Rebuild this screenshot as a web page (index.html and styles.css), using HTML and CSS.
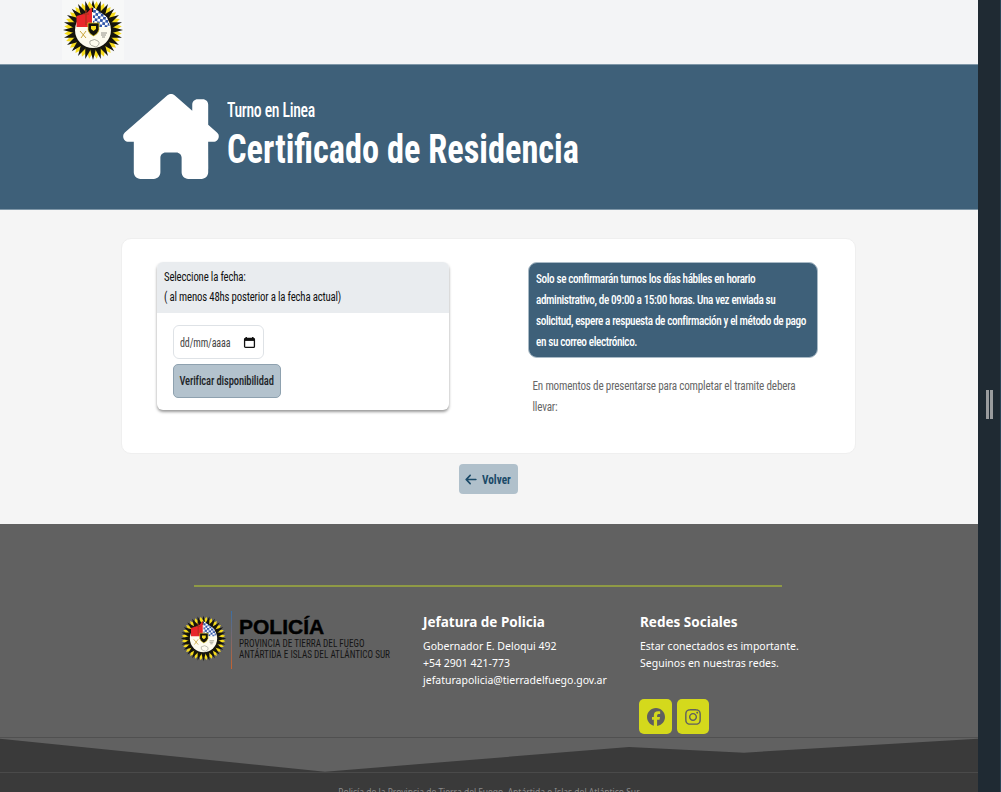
FILE: index.html
```html
<!DOCTYPE html>
<html lang="es">
<head>
<meta charset="utf-8">
<title>Certificado de Residencia</title>
<link rel="stylesheet" href="styles.css">
</head>
<body>
<svg class="defs" width="0" height="0" aria-hidden="true">
  <defs>
    <pattern id="chk" width="5.400" height="5.400" patternUnits="userSpaceOnUse" patternTransform="rotate(8)">
      <rect width="5.400" height="5.400" fill="#fff"/>
      <rect width="2.700" height="2.700" fill="#2f55a8"/>
      <rect x="2.700" y="2.700" width="2.700" height="2.700" fill="#2f55a8"/>
    </pattern>
    <g id="ray">
      <path d="M27.500 8h7L31 1z" fill="#f6dc1c" transform="rotate(7.500 31 30)"/>
      <path d="M27.500 13h7L31 0z" fill="#15140c"/>
    </g>
    <g id="rays6">
      <use href="#ray"/>
      <use href="#ray" transform="rotate(15 31 30)"/>
      <use href="#ray" transform="rotate(30 31 30)"/>
      <use href="#ray" transform="rotate(45 31 30)"/>
      <use href="#ray" transform="rotate(60 31 30)"/>
      <use href="#ray" transform="rotate(75 31 30)"/>
    </g>
    <symbol id="crest" viewBox="0 0 62 60">
      <circle cx="31" cy="30" r="24" fill="#f6dc1c"/>
      <use href="#rays6"/>
      <use href="#rays6" transform="rotate(90 31 30)"/>
      <use href="#rays6" transform="rotate(180 31 30)"/>
      <use href="#rays6" transform="rotate(270 31 30)"/>
      <circle cx="31" cy="30" r="18" fill="#fdfbee"/>
      <path d="M14.500 27V16L25 13 30 7v20z" fill="#e8262a"/>
      <path d="M24 10v15M21 14h6" stroke="#a8331c" stroke-width="1.200" fill="none"/>
      <path d="M31 7l14 10 3 10H31z" fill="url(#chk)"/>
      <path d="M26 23h11v7q-1 4-5.500 6q-4.500-2-5.500-6z" fill="#14130c" stroke="#f6dc1c" stroke-width=".7"/>
      <path d="M29 26h5v3l-2.500 2-2.500-2z" fill="#f6dc1c"/>
      <path d="M18 31l6 7M24 31l-5 7" stroke="#c9a43a" stroke-width="1"/>
      <path d="M28 41q5-3 8 0t-2 6l-3-1q-4-1-3-5z" fill="none" stroke="#8a8a80" stroke-width=".7"/>
      <path d="M39 33h6M39 35h5M40 37h3" stroke="#77776c" stroke-width=".8"/>
    </symbol>
  </defs>
</svg>
<div class="page">
  <header class="topbar">
    <svg class="crest-top"><use href="#crest"/></svg>
  </header>
  <section class="hero">
    <svg class="hero-icon" viewBox="0 0 576 512"><path fill="#fff" d="M543.800 287.600c17 0 32-14 32-32.100c1-9-3-17-11-24L512 185V64c0-17.700-14.300-32-32-32H448c-17.700 0-32 14.300-32 32v36.700L309.500 7c-6-5-14-7-21-7s-15 1-22 8L10 231.500c-7 7-10 15-10 24c0 18 14 32.100 32 32.100h32v69.700c-.1 .9-.1 1.800-.1 2.800V472c0 22.100 17.900 40 40 40h16c1.200 0 2.400-.1 3.600-.2c1.500 .1 3 .2 4.500 .2H160h24c22.100 0 40-17.900 40-40V448 384c0-17.700 14.300-32 32-32h64c17.700 0 32 14.300 32 32v64 24c0 22.100 17.900 40 40 40h24 32.500c1.400 0 2.800 0 4.200-.1c1.100 .1 2.200 .1 3.300 .1h16c22.100 0 40-17.900 40-40V455.800c.3-2.600 .5-5.300 .5-8.100l-.7-160.200h32z"/></svg>
    <div class="hero-text">
      <p class="hero-sub">Turno en Linea</p>
      <h1 class="hero-title">Certificado de Residencia</h1>
    </div>
  </section>
  <main class="main">
    <section class="panel">
      <div class="date-card">
        <div class="date-head">
          <p>Seleccione la fecha:</p>
          <p>( al menos 48hs posterior a la fecha actual)</p>
        </div>
        <div class="date-body">
          <div class="date-input">
            <span class="date-text">dd/mm/aaaa</span>
            <svg class="cal" viewBox="0 0 14 14"><path d="M3.500 1v2M10.500 1v2" stroke="#111" stroke-width="1.500"/><rect x="1.700" y="2.700" width="10.600" height="9.600" rx="1" fill="none" stroke="#111" stroke-width="1.400"/><rect x="1.700" y="2.700" width="10.600" height="2.600" fill="#111"/></svg>
          </div>
          <button class="btn-check" type="button"><span>Verificar disponibilidad</span></button>
        </div>
      </div>
      <div class="info">
        <div class="notice"><p>Solo se confirmarán turnos los días hábiles en horario<br>administrativo, de 09:00 a 15:00 horas. Una vez enviada su<br>solicitud, espere a respuesta de confirmación y el método de pago<br>en su correo electrónico.</p></div>
        <p class="bring">En momentos de presentarse para completar el tramite debera<br>llevar:</p>
      </div>
    </section>
    <button class="btn-back" type="button">
      <svg viewBox="0 0 448 512"><path fill="#1b4a68" d="M9.400 233.400c-12.500 12.500-12.500 32.800 0 45.300l160 160c12.500 12.500 32.800 12.500 45.300 0s12.500-32.800 0-45.300L109.200 288 416 288c17.700 0 32-14.300 32-32s-14.300-32-32-32l-306.700 0L214.600 118.600c12.500-12.500 12.500-32.800 0-45.300s-32.800-12.500-45.300 0l-160 160z"/></svg>
      <span>Volver</span>
    </button>
  </main>
  <footer class="footer">
    <hr class="rule">
    <div class="cols">
      <div class="brand">
        <svg class="crest-foot"><use href="#crest"/></svg>
        <span class="brand-rule"></span>
        <div class="brand-text">
          <strong>POLICÍA</strong>
          <span>PROVINCIA DE TIERRA DEL FUEGO</span>
          <span>ANTÁRTIDA E ISLAS DEL ATLÁNTICO SUR</span>
        </div>
      </div>
      <div class="col-contact">
        <h2>Jefatura de Policia</h2>
        <p>Gobernador E. Deloqui 492</p>
        <p>+54 2901 421-773</p>
        <p>jefaturapolicia@tierradelfuego.gov.ar</p>
      </div>
      <div class="col-social">
        <h2>Redes Sociales</h2>
        <p>Estar conectados es importante.</p>
        <p>Seguinos en nuestras redes.</p>
        <div class="socials">
          <a class="social social-fb" href="#"><svg viewBox="0 0 512 512"><path fill="#5f5f5f" d="M512 256C512 114.600 397.400 0 256 0S0 114.600 0 256C0 376 82.700 476.800 194.200 504.500V334.200H141.400V256h52.800V222.300c0-87.100 39.400-127.500 125-127.500c16.200 0 44.200 3.200 55.700 6.400V172c-6-.6-16.500-1-29.600-1c-42 0-58.200 15.900-58.200 57.200V256h83.600l-14.400 78.200H287V510.100C413.800 494.800 512 386.900 512 256h0z"/></svg></a>
          <a class="social" href="#"><svg viewBox="0 0 448 512"><path fill="#5f5f5f" d="M224.100 141c-63.600 0-114.900 51.300-114.900 114.900s51.300 114.900 114.900 114.900S339 319.500 339 255.900 287.700 141 224.100 141zm0 189.600c-41.100 0-74.700-33.500-74.700-74.700s33.500-74.700 74.700-74.700 74.700 33.500 74.700 74.700-33.600 74.700-74.700 74.700zm146.400-194.300c0 14.900-12 26.800-26.800 26.800-14.900 0-26.800-12-26.800-26.800s12-26.800 26.800-26.800 26.800 12 26.800 26.800zm76.100 27.200c-1.700-35.900-9.900-67.700-36.200-93.900-26.200-26.200-58-34.400-93.900-36.200-37-2.100-147.900-2.100-184.900 0-35.800 1.700-67.600 9.900-93.900 36.100s-34.400 58-36.200 93.900c-2.100 37-2.100 147.900 0 184.900 1.700 35.900 9.900 67.700 36.200 93.900s58 34.400 93.900 36.200c37 2.100 147.900 2.100 184.900 0 35.900-1.700 67.700-9.900 93.900-36.200 26.200-26.200 34.400-58 36.200-93.900 2.100-37 2.100-147.800 0-184.800zM398.800 388c-7.800 19.600-22.900 34.700-42.600 42.600-29.500 11.700-99.500 9-132.100 9s-102.700 2.600-132.100-9c-19.600-7.800-34.700-22.900-42.600-42.600-11.700-29.500-9-99.500-9-132.100s-2.600-102.700 9-132.100c7.800-19.600 22.900-34.700 42.600-42.600 29.500-11.700 99.500-9 132.100-9s102.700-2.600 132.100 9c19.600 7.800 34.700 22.900 42.600 42.600 11.700 29.500 9 99.500 9 132.100s2.700 102.700-9 132.100z"/></svg></a>
        </div>
      </div>
    </div>
    <svg class="wave" viewBox="0 0 978 34" preserveAspectRatio="none"><path fill="#3a3a3a" d="M0 .7L325 33.700 629 9 744 14.700 978 .7V34H0z"/></svg>
    <div class="copy"><p>Policía de la Provincia de Tierra del Fuego, Antártida e Islas del Atlántico Sur</p></div>
  </footer>
</div>
<aside class="rail"><span class="grip"></span><span class="grip"></span></aside>
</body>
</html>
```

FILE: styles.css
```css
* { box-sizing: border-box; }
html, body { margin: 0; height: 100%; }
body {
  display: flex;
  height: 792px;
  overflow: hidden;
  font-family: Roboto, "Liberation Sans", sans-serif;
  font-stretch: 75%;
  background: #f5f5f5;
}
p, h1, h2 { margin: 0; }
.defs { position: absolute; }
.page { width: 978px; flex: none; display: flex; flex-direction: column; }

.topbar { height: 64px; background: #f3f4f6; padding-left: 62px; flex: none; }
.crest-top { width: 62px; height: 60px; display: block; background: #f7f8f8; }

.hero {
  height: 146px;
  flex: none;
  background: #3e6079;
  border-top: 1px solid #7f97a8;
  border-bottom: 1px solid #7f97a8;
  display: flex;
  align-items: center;
  padding-left: 123px;
  gap: 8px;
  color: #fff;
}
.hero-icon { width: 96px; height: 85px; flex: none; margin-top: -1px; }
.hero-text { margin-top: -2px; }
.hero-sub { font-size: 20px; line-height: 24px; font-weight: 500; letter-spacing: -.4px; transform: scaleX(.786); transform-origin: left; white-space: nowrap; margin-top: -2px; }
.hero-title { margin-top: 5px; font-size: 40px; line-height: 46px; font-weight: 700; transform: scaleX(.858); transform-origin: left; white-space: nowrap; }

.main { height: 314px; flex: none; background: #f5f5f5; padding: 28px 2px 0 0; display: flex; flex-direction: column; align-items: center; }
.panel {
  width: 735px;
  height: 216px;
  background: #fff;
  border: 1px solid #efefef;
  border-radius: 10px;
  padding: 23px 37px 23px 35px;
  display: flex;
  justify-content: space-between;
  flex: none;
}
.date-card {
  width: 292px;
  height: 148px;
  background: #fff;
  border-radius: 6px;
  box-shadow: 0 2px 3px rgba(0,0,0,.4);
  overflow: hidden;
}
.date-head { height: 51px; background: #e9ecef; padding: 5px 7px; font-size: 12.500px; line-height: 20px; color: #111; letter-spacing: -.2px; }
.date-head p { transform: scaleX(.862); transform-origin: left; white-space: nowrap; }
.date-body { padding: 12px 16px; display: flex; flex-direction: column; align-items: flex-start; gap: 5px; }
.date-input {
  width: 91px; height: 34px;
  border: 1px solid #dee2e6;
  border-radius: 6px;
  display: flex; align-items: center; justify-content: space-between;
  padding: 0 7px 0 6px;
  font-size: 12.500px; color: #444; letter-spacing: -.15px;
}
.date-text { display: block; width: 52px; transform: scaleX(.8); transform-origin: left; white-space: nowrap; }
.cal { width: 13px; height: 13px; }
.btn-check {
  width: 108px; height: 34px;
  padding: 0;
  display: flex; align-items: center; justify-content: center;
  background: #b3c2cd;
  border: 1px solid #8ea1af;
  border-radius: 5px;
  font: 500 12px Roboto, "Liberation Sans", sans-serif;
  font-stretch: 75%;
  letter-spacing: -.15px;
  color: #212529;
  white-space: nowrap;
}
.btn-check span { display: block; transform: scaleX(.88); }

.info { width: 290px; }
.notice {
  height: 96px;
  background: #3e6079;
  border: 1px solid #a9bac6;
  border-radius: 9px;
  padding: 5px 7px;
  font-size: 12.500px;
  line-height: 21px;
  letter-spacing: -.45px;
  font-weight: 500;
  color: #fff;
  white-space: nowrap;
}
.notice p { transform: scaleX(.9); transform-origin: left; }
.bring { padding: 17px 5px 0; font-size: 12.500px; line-height: 21px; color: #666; letter-spacing: -.2px; white-space: nowrap; transform: scaleX(.89); transform-origin: left; }

.btn-back {
  margin-top: 10px;
  width: 59px; height: 30px;
  padding: 0;
  display: flex; align-items: center; justify-content: flex-start; gap: 5px;
  padding-left: 6px;
  background: #b0c0cb;
  border: 0;
  border-radius: 4px;
  font: 700 12.500px Roboto, "Liberation Sans", sans-serif;
  font-stretch: 75%;
  color: #1b4a68;
}
.btn-back svg { width: 12px; height: 13px; }
.btn-back span { transform: scaleX(.9); transform-origin: left; }

.footer { flex: 1; background: #616161; display: flex; flex-direction: column; color: #fff; font-family: "Noto Sans", sans-serif; font-stretch: 100%; overflow: hidden; }
.rule { width: 588px; margin: 61px 0 0 194px; height: 2px; border: 0; background: #8f9a45; flex: none; }
.cols { height: 151px; flex: none; border-bottom: 1px solid #505050; display: flex; padding-top: 25px; }
.brand { width: 243px; margin-left: 180px; margin-top: -1px; display: flex; align-items: flex-start; flex: none; }
.crest-foot { width: 47px; height: 47px; flex: none; margin-top: 4px; }
.brand-rule { width: 1px; height: 58px; margin: 0 7px 0 4px; background: linear-gradient(#3a6fa5, #c7622e); flex: none; }
.brand-text {
  display: flex; flex-direction: column; color: #151515;
  font-family: Roboto, "Liberation Sans", sans-serif;
  font-stretch: 75%;
  font-size: 10.500px; line-height: 11px; white-space: nowrap;
}
.brand-text span { transform: scaleX(.875); transform-origin: left; }
.brand-text strong { font: 700 21px/22px "Liberation Sans", sans-serif; color: #000; margin-top: 5px; -webkit-text-stroke: .4px #000; }
.col-contact { width: 217px; flex: none; }
.col-social { flex: 1; }
.footer h2 { font-size: 13.500px; line-height: 20px; font-weight: 700; margin-bottom: 6px; }
.cols p { font-size: 10.500px; line-height: 17px; }
.socials { display: flex; gap: 5px; margin: 27px 0 0 -1px; }
.social { width: 32px; height: 35px; background: #d4d91c; border-radius: 5px; display: flex; align-items: center; justify-content: center; }
.social-fb { width: 33px; }
.social svg { height: 18px; width: 18px; }
.wave { width: 978px; height: 34px; display: block; flex: none; background: #616161; }
.copy { flex: 1; background: #3a3a3a; border-top: 1px solid #4a4a4a; padding-top: 14px; text-align: center; }
.copy p { font-size: 8.500px; line-height: 10px; color: #8a8a8a; }

.rail { width: 23px; flex: none; background: #1f2a33; border-right: 1px solid #2a4556; display: flex; align-items: center; justify-content: flex-start; gap: 1px; padding-left: 8px; padding-top: 17px; }
.grip { width: 3px; height: 29px; background: #9a9c9e; }
```
